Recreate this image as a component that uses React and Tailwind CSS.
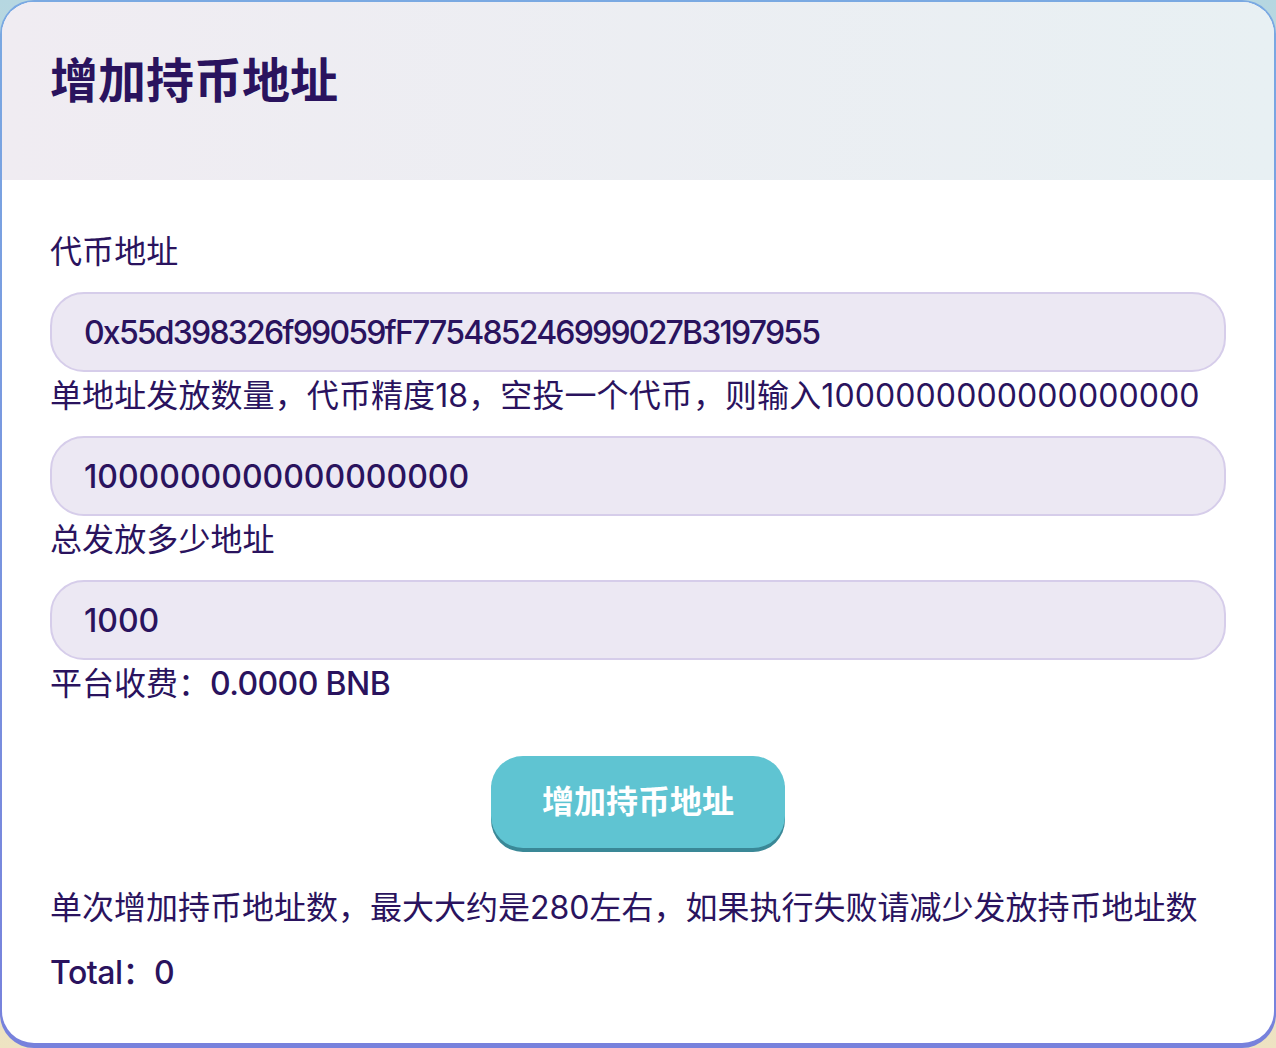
import React, { useState } from 'react';

const FONT = "font-['Inter','Noto_Sans_CJK_SC',sans-serif]";

const fields = [
  { label: '代币地址', value: '0x55d398326f99059fF775485246999027B3197955', track: 'tracking-[-1.8px]' },
  { label: '单地址发放数量，代币精度18，空投一个代币，则输入1000000000000000000', value: '1000000000000000000', track: 'tracking-[0px]' },
  { label: '总发放多少地址', value: '1000', track: 'tracking-[0px]' },
];

const App = () => {
  const [values, setValues] = useState(fields.map((f) => f.value));

  return (
    <div className={`w-[1276px] h-[1048px] bg-gradient-to-b from-[#b6d7e1] to-[#eee3c2] ${FONT} text-[#2a135e]`}>
      <div className="h-full rounded-[34px] bg-gradient-to-b from-[#7aa9e2] to-[#7781dc] pt-[2px] px-[2px] pb-[5px]">
        <div className="h-full rounded-[32px] bg-white overflow-hidden flex flex-col">
          {/* Header */}
          <header className="h-[178px] shrink-0 bg-gradient-to-r from-[#f0ecf2] to-[#e8f0f3] px-[48px] flex items-center">
            <h1 className="text-[48px] font-bold leading-none -mt-[20px]">增加持币地址</h1>
          </header>

          <main className="px-[48px] pt-[48px]">
            {fields.map((f, i) => (
              <div key={i}>
                <label className="block text-[32px] leading-[48px] mb-[16px] tracking-[0.1px]">{f.label}</label>
                <input
                  value={values[i]}
                  onChange={(e) => setValues(values.map((v, j) => (j === i ? e.target.value : v)))}
                  className={`w-full h-[80px] rounded-[34px] bg-[#ece8f3] border-2 border-[#d6cdea] px-[32px] text-[32px] font-medium ${f.track} text-[#2a135e] outline-none`}
                />
              </div>
            ))}

            <p className="text-[32px] leading-[48px]">
              平台收费：<span className="font-medium tracking-[-0.6px]">0.0000 BNB</span>
            </p>

            <div className="flex justify-center mt-[48px]">
              <button className="w-[294px] h-[92px] rounded-[32px] bg-[#5fc4d2] text-white text-[32px] font-semibold shadow-[0_4px_0_#3a8897]">
                增加持币地址
              </button>
            </div>

            <p className="text-[32px] leading-[48px] mt-[36px]">
              单次增加持币地址数，最大大约是280左右，如果执行失败请减少发放持币地址数
            </p>
            <p className="text-[32px] leading-[48px] mt-[17px] font-medium tracking-[-0.5px]">Total：0</p>
          </main>
        </div>
      </div>
    </div>
  );
};

export default App;
